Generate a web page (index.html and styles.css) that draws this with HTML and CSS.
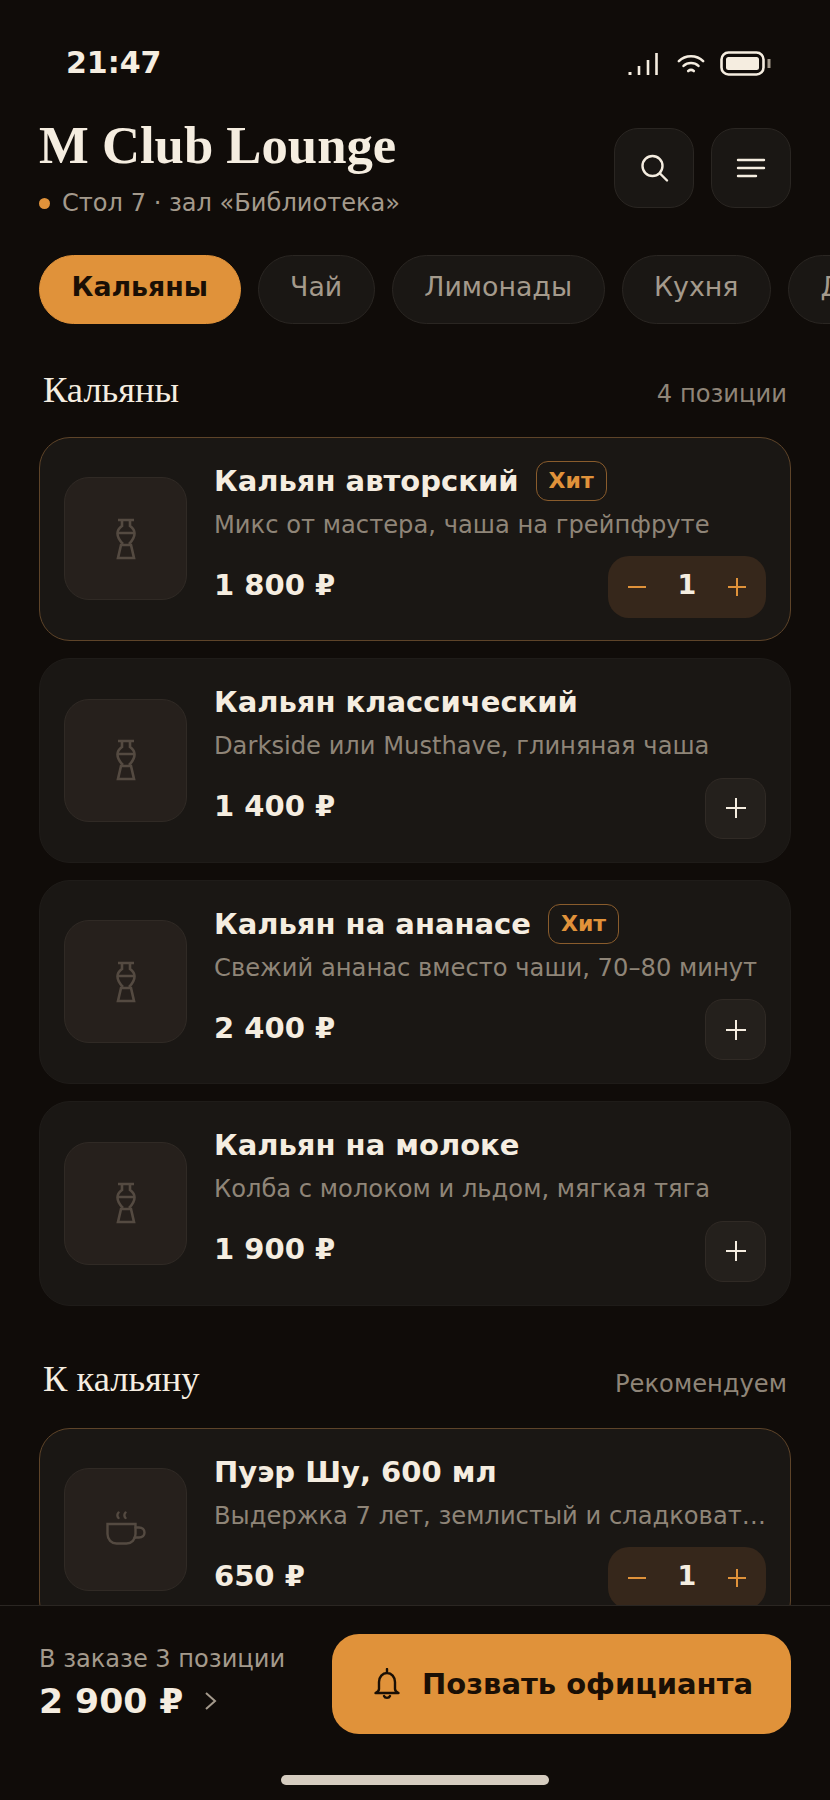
FILE: index.html
```html
<!DOCTYPE html>
<html lang="ru">
<head>
  <meta charset="UTF-8">
  <title>M Club Lounge</title>
  <link rel="stylesheet" href="styles.css">
</head>
<body>

<div class="app">
  <!-- Статус-бар -->
  <div class="status-bar">
    <span class="time">21:47</span>
    <div class="status-icons">
      <svg class="signal" width="30" height="22" viewBox="0 0 30 22" fill="none" stroke="#f5ede0" stroke-width="2.600">
        <path d="M2 19v3" stroke-width="3"/>
        <path d="M11 13v9M20 7v15M28.500 0v22"/>
      </svg>
      <svg width="28" height="22" viewBox="0 0 30 22" fill="none" stroke="#f5ede0" stroke-width="2.800" stroke-linecap="round">
        <path d="M2 8C9 1 21 1 28 8"/>
        <path d="M7 13c4.500-4 11.500-4 16 0"/>
        <path d="M12 18.500c2-1.500 4-1.500 6 0"/>
      </svg>
      <svg width="51" height="25" viewBox="0 0 51 25" fill="none">
        <rect x="1.500" y="1.500" width="42" height="22" rx="7" stroke="#f5ede0" stroke-width="2.600"/>
        <rect x="6" y="6" width="33" height="13" rx="2.500" fill="#f5ede0"/>
        <path d="M49 8v9" stroke="#a49a8c" stroke-width="3"/>
      </svg>
    </div>
  </div>

  <!-- Шапка -->
  <header class="header">
    <div class="header-text">
      <h1>M Club Lounge</h1>
      <p class="table-info"><span class="dot"></span>Стол 7 · зал «Библиотека»</p>
    </div>
    <div class="header-actions">
      <button class="icon-btn">
        <svg width="30" height="30" viewBox="0 0 30 30" fill="none" stroke="#f5ede0" stroke-width="2.400" stroke-linecap="round">
          <circle cx="13.500" cy="13" r="10"/>
          <path d="M21 20.500l7 7"/>
        </svg>
      </button>
      <button class="icon-btn">
        <svg width="30" height="24" viewBox="0 0 30 24" fill="none" stroke="#f5ede0" stroke-width="2.400" stroke-linecap="round">
          <path d="M2 4h26M2 12h26M2 20h18"/>
        </svg>
      </button>
    </div>
  </header>

  <!-- Категории -->
  <nav class="tabs">
    <span class="tab tab-active">Кальяны</span>
    <span class="tab">Чай</span>
    <span class="tab">Лимонады</span>
    <span class="tab">Кухня</span>
    <span class="tab">Десерты</span>
  </nav>

  <main class="menu">
    <div class="section-head">
      <h2>Кальяны</h2>
      <span class="section-note">4 позиции</span>
    </div>

    <div class="card card-selected">
      <div class="thumb">
        <svg width="20" height="42" viewBox="0 0 20 42" fill="none" stroke="#544a41" stroke-width="2.600">
          <path d="M2 2h16M6 2v6c-3 2-4.500 4.500-4.500 7.500 0 5 3 8 5.500 10.500M14 2v6c3 2 4.500 4.500 4.500 7.500 0 5-3 8-5.500 10.500"/>
          <path d="M1.500 15h17M5 27h10l3 13H2z"/>
        </svg>
      </div>
      <div class="card-body">
        <div class="card-title">
          <h3>Кальян авторский</h3>
          <span class="badge">Хит</span>
        </div>
        <p class="card-desc">Микс от мастера, чаша на грейпфруте</p>
        <div class="card-foot">
          <span class="price">1 800 ₽</span>
          <div class="stepper">
            <svg width="18" height="18" viewBox="0 0 18 18" stroke="#e0923a" stroke-width="2"><path d="M0 9h18"/></svg>
            <span class="qty">1</span>
            <svg width="18" height="18" viewBox="0 0 18 18" stroke="#e0923a" stroke-width="2"><path d="M0 9h18M9 0v18"/></svg>
          </div>
        </div>
      </div>
    </div>

    <div class="card">
      <div class="thumb">
        <svg width="20" height="42" viewBox="0 0 20 42" fill="none" stroke="#544a41" stroke-width="2.600">
          <path d="M2 2h16M6 2v6c-3 2-4.500 4.500-4.500 7.500 0 5 3 8 5.500 10.500M14 2v6c3 2 4.500 4.500 4.500 7.500 0 5-3 8-5.500 10.500"/>
          <path d="M1.500 15h17M5 27h10l3 13H2z"/>
        </svg>
      </div>
      <div class="card-body">
        <div class="card-title">
          <h3>Кальян классический</h3>
        </div>
        <p class="card-desc">Darkside или Musthave, глиняная чаша</p>
        <div class="card-foot">
          <span class="price">1 400 ₽</span>
          <button class="add-btn">
            <svg width="20" height="20" viewBox="0 0 20 20" stroke="#f5ede0" stroke-width="2"><path d="M0 10h20M10 0v20"/></svg>
          </button>
        </div>
      </div>
    </div>

    <div class="card">
      <div class="thumb">
        <svg width="20" height="42" viewBox="0 0 20 42" fill="none" stroke="#544a41" stroke-width="2.600">
          <path d="M2 2h16M6 2v6c-3 2-4.500 4.500-4.500 7.500 0 5 3 8 5.500 10.500M14 2v6c3 2 4.500 4.500 4.500 7.500 0 5-3 8-5.500 10.500"/>
          <path d="M1.500 15h17M5 27h10l3 13H2z"/>
        </svg>
      </div>
      <div class="card-body">
        <div class="card-title">
          <h3>Кальян на ананасе</h3>
          <span class="badge">Хит</span>
        </div>
        <p class="card-desc">Свежий ананас вместо чаши, 70–80 минут</p>
        <div class="card-foot">
          <span class="price">2 400 ₽</span>
          <button class="add-btn">
            <svg width="20" height="20" viewBox="0 0 20 20" stroke="#f5ede0" stroke-width="2"><path d="M0 10h20M10 0v20"/></svg>
          </button>
        </div>
      </div>
    </div>

    <div class="card">
      <div class="thumb">
        <svg width="20" height="42" viewBox="0 0 20 42" fill="none" stroke="#544a41" stroke-width="2.600">
          <path d="M2 2h16M6 2v6c-3 2-4.500 4.500-4.500 7.500 0 5 3 8 5.500 10.500M14 2v6c3 2 4.500 4.500 4.500 7.500 0 5-3 8-5.500 10.500"/>
          <path d="M1.500 15h17M5 27h10l3 13H2z"/>
        </svg>
      </div>
      <div class="card-body">
        <div class="card-title">
          <h3>Кальян на молоке</h3>
        </div>
        <p class="card-desc">Колба с молоком и льдом, мягкая тяга</p>
        <div class="card-foot">
          <span class="price">1 900 ₽</span>
          <button class="add-btn">
            <svg width="20" height="20" viewBox="0 0 20 20" stroke="#f5ede0" stroke-width="2"><path d="M0 10h20M10 0v20"/></svg>
          </button>
        </div>
      </div>
    </div>

    <div class="section-head section-second">
      <h2>К кальяну</h2>
      <span class="section-note">Рекомендуем</span>
    </div>

    <div class="card card-selected">
      <div class="thumb">
        <svg class="cup" width="40" height="34" viewBox="0 0 40 34" fill="none" stroke="#544a41" stroke-width="2.400" stroke-linecap="round">
          <path d="M12.500 1.500c-1.500 1.500-1.500 4 0 5.500M19.500 1.500c-1.500 1.500-1.500 4 0 5.500"/>
          <path d="M1.500 13h28v10c0 5.500-4 9.500-9 9.500h-10c-5 0-9-4-9-9.500z"/>
          <path d="M29.500 16.500h3.500c3.500 0 5.500 2.200 5.500 5s-2 5-5.500 5h-4.500"/>
        </svg>
      </div>
      <div class="card-body">
        <div class="card-title">
          <h3>Пуэр Шу, 600 мл</h3>
        </div>
        <p class="card-desc">Выдержка 7 лет, землистый и сладковатый вкус</p>
        <div class="card-foot">
          <span class="price">650 ₽</span>
          <div class="stepper">
            <svg width="18" height="18" viewBox="0 0 18 18" stroke="#e0923a" stroke-width="2"><path d="M0 9h18"/></svg>
            <span class="qty">1</span>
            <svg width="18" height="18" viewBox="0 0 18 18" stroke="#e0923a" stroke-width="2"><path d="M0 9h18M9 0v18"/></svg>
          </div>
        </div>
      </div>
    </div>
  </main>

  <!-- Нижняя панель заказа -->
  <footer class="order-bar">
    <div class="order-row">
      <div class="order-sum">
        <span class="order-label">В заказе 3 позиции</span>
        <span class="order-total">2 900 ₽
          <svg width="12" height="20" viewBox="0 0 12 20" fill="none" stroke="#a49a8c" stroke-width="2"><path d="M1 2l9 8-9 8"/></svg>
        </span>
      </div>
      <button class="call-btn">
        <svg width="26" height="32" viewBox="0 0 26 32" fill="none" stroke="#1a0f05" stroke-width="2.400" stroke-linecap="round" stroke-linejoin="round">
          <path d="M13 1v3M5 14c0-5 3.500-9 8-9s8 4 8 9v7c0 2 1.500 3 3.500 4h-23c2-1 3.500-2 3.500-4z"/>
          <path d="M10 28c1 2.500 5 2.500 6 0"/>
        </svg>
        Позвать официанта
      </button>
    </div>
    <div class="home-indicator"></div>
  </footer>
</div>

</body>
</html>
```

FILE: styles.css
```css
/* --- RESET & BASE --- */
* {
  margin: 0;
  padding: 0;
  box-sizing: border-box;
}
html, body {
  height: 100%;
  overflow: hidden;
}
body {
  background: #100c09;
  color: #f5ede0;
  font-family: 'DejaVu Sans', sans-serif;
}
button {
  font-family: inherit;
  cursor: pointer;
}

.app {
  display: flex;
  flex-direction: column;
  height: 1800px;
}

/* --- STATUS BAR --- */
.status-bar {
  display: flex;
  justify-content: space-between;
  align-items: center;
  height: 40px;
  margin-top: 42px;
  padding: 0 59px 0 66px;
}
.time {
  font-size: 30px;
  font-weight: bold;
}
.status-icons {
  display: flex;
  align-items: center;
  gap: 15px;
  margin-top: 3px;
}
.signal {
  margin-right: 4px;
}

/* --- HEADER --- */
.header {
  display: flex;
  justify-content: space-between;
  align-items: flex-start;
  margin-top: 33px;
  padding: 0 39px;
}
.header h1 {
  font-family: 'Liberation Serif', serif;
  font-size: 52.700px;
  font-weight: bold;
  line-height: 60px;
}
.table-info {
  display: flex;
  align-items: center;
  gap: 12px;
  margin-top: 13px;
  font-size: 24.100px;
  line-height: 30px;
  color: #a49a8c;
}
.dot {
  width: 11px;
  height: 11px;
  border-radius: 50%;
  background: #e0923a;
}
.header-actions {
  display: flex;
  gap: 17px;
  margin-top: 13px;
}
.icon-btn {
  display: flex;
  align-items: center;
  justify-content: center;
  width: 80px;
  height: 80px;
  background: #1a1714;
  border: 1.5px solid #2a2622;
  border-radius: 24px;
}

/* --- TABS --- */
.tabs {
  display: flex;
  flex-shrink: 0;
  gap: 17px;
  margin-top: 37px;
  padding-left: 39px;
  overflow: hidden;
}
.tab {
  flex-shrink: 0;
  height: 69px;
  padding: 0 31.500px;
  line-height: 61px;
  font-size: 26.800px;
  color: #a49a8c;
  background: #1a1714;
  border: 1.5px solid #2a2622;
  border-radius: 35px;
}
.tab-active {
  font-weight: bold;
  color: #1a0f05;
  background: #e0923a;
  border-color: #e0923a;
}

/* --- MENU --- */
.menu {
  flex: 1;
  min-height: 0;
  overflow: hidden;
  padding: 0 39px;
}
.section-head {
  display: flex;
  justify-content: space-between;
  align-items: center;
  height: 40px;
  margin: 46px 0 26.500px;
  padding: 0 4px;
}
.section-second {
  margin: 54px 0 28px;
}
.section-head h2 {
  padding-bottom: 2px;
  font-family: 'Liberation Serif', serif;
  font-size: 36.500px;
  font-weight: normal;
}
.section-note {
  padding-top: 8px;
  font-size: 24.200px;
  color: #8f8578;
}

/* --- CARDS --- */
.card {
  display: flex;
  align-items: center;
  gap: 27px;
  height: 204.500px;
  margin-bottom: 17px;
  padding: 0 24px;
  background: #1a1714;
  border: 1.5px solid #1f1c19;
  border-radius: 31px;
}
.card-selected {
  border-color: #5e4429;
}
.thumb {
  display: flex;
  flex-shrink: 0;
  align-items: center;
  justify-content: center;
  width: 123px;
  height: 123px;
  background: #26201c;
  border: 1.5px solid #302a25;
  border-radius: 25px;
}
.cup {
  margin-bottom: 4px;
}
.card-body {
  flex: 1;
  min-width: 0;
  padding-top: 1px;
}
.card-title {
  display: flex;
  align-items: center;
  gap: 17px;
  height: 40px;
}
.card-title h3 {
  font-size: 29px;
  font-weight: bold;
}
.badge {
  height: 40px;
  padding: 0 12px;
  line-height: 37px;
  font-size: 22px;
  font-weight: bold;
  color: #e0923a;
  border: 1.5px solid #8a5c2c;
  border-radius: 12px;
}
.card-desc {
  margin-top: 9px;
  font-size: 24.200px;
  line-height: 30px;
  color: #8f8578;
  white-space: nowrap;
  overflow: hidden;
  text-overflow: ellipsis;
}
.card-foot {
  display: flex;
  justify-content: space-between;
  align-items: center;
  height: 62px;
  margin-top: 16px;
}
.price {
  padding-bottom: 4px;
  font-size: 29px;
  font-weight: bold;
}
.stepper {
  display: flex;
  justify-content: space-between;
  align-items: center;
  width: 158px;
  height: 62px;
  padding: 0 20px;
  background: #36271b;
  border-radius: 21px;
}
.qty {
  padding-bottom: 5px;
  font-size: 27px;
  font-weight: bold;
}
.add-btn {
  display: flex;
  align-items: center;
  justify-content: center;
  width: 61px;
  height: 61px;
  background: #24201c;
  border: 1.5px solid #302a25;
  border-radius: 18px;
}

/* --- ORDER BAR --- */
.order-bar {
  flex-shrink: 0;
  height: 195px;
  padding: 28px 39px 0;
  background: #100c09;
  border-top: 1.5px solid #2a2622;
}
.order-row {
  display: flex;
  justify-content: space-between;
  align-items: center;
}
.order-sum {
  display: flex;
  flex-direction: column;
  gap: 8px;
  padding-bottom: 2px;
}
.order-label {
  font-size: 24.100px;
  color: #a49a8c;
}
.order-total {
  display: flex;
  align-items: center;
  gap: 22px;
  font-size: 34.600px;
  font-weight: bold;
}
.call-btn {
  display: flex;
  align-items: center;
  justify-content: center;
  gap: 22px;
  width: 459px;
  height: 100px;
  padding-left: 4px;
  font-size: 29px;
  font-weight: bold;
  color: #1a0f05;
  background: #e0923a;
  border: none;
  border-radius: 27px;
}
.home-indicator {
  width: 268px;
  height: 10px;
  margin: 41px auto 0;
  background: #d6cdc0;
  border-radius: 5px;
}
```
